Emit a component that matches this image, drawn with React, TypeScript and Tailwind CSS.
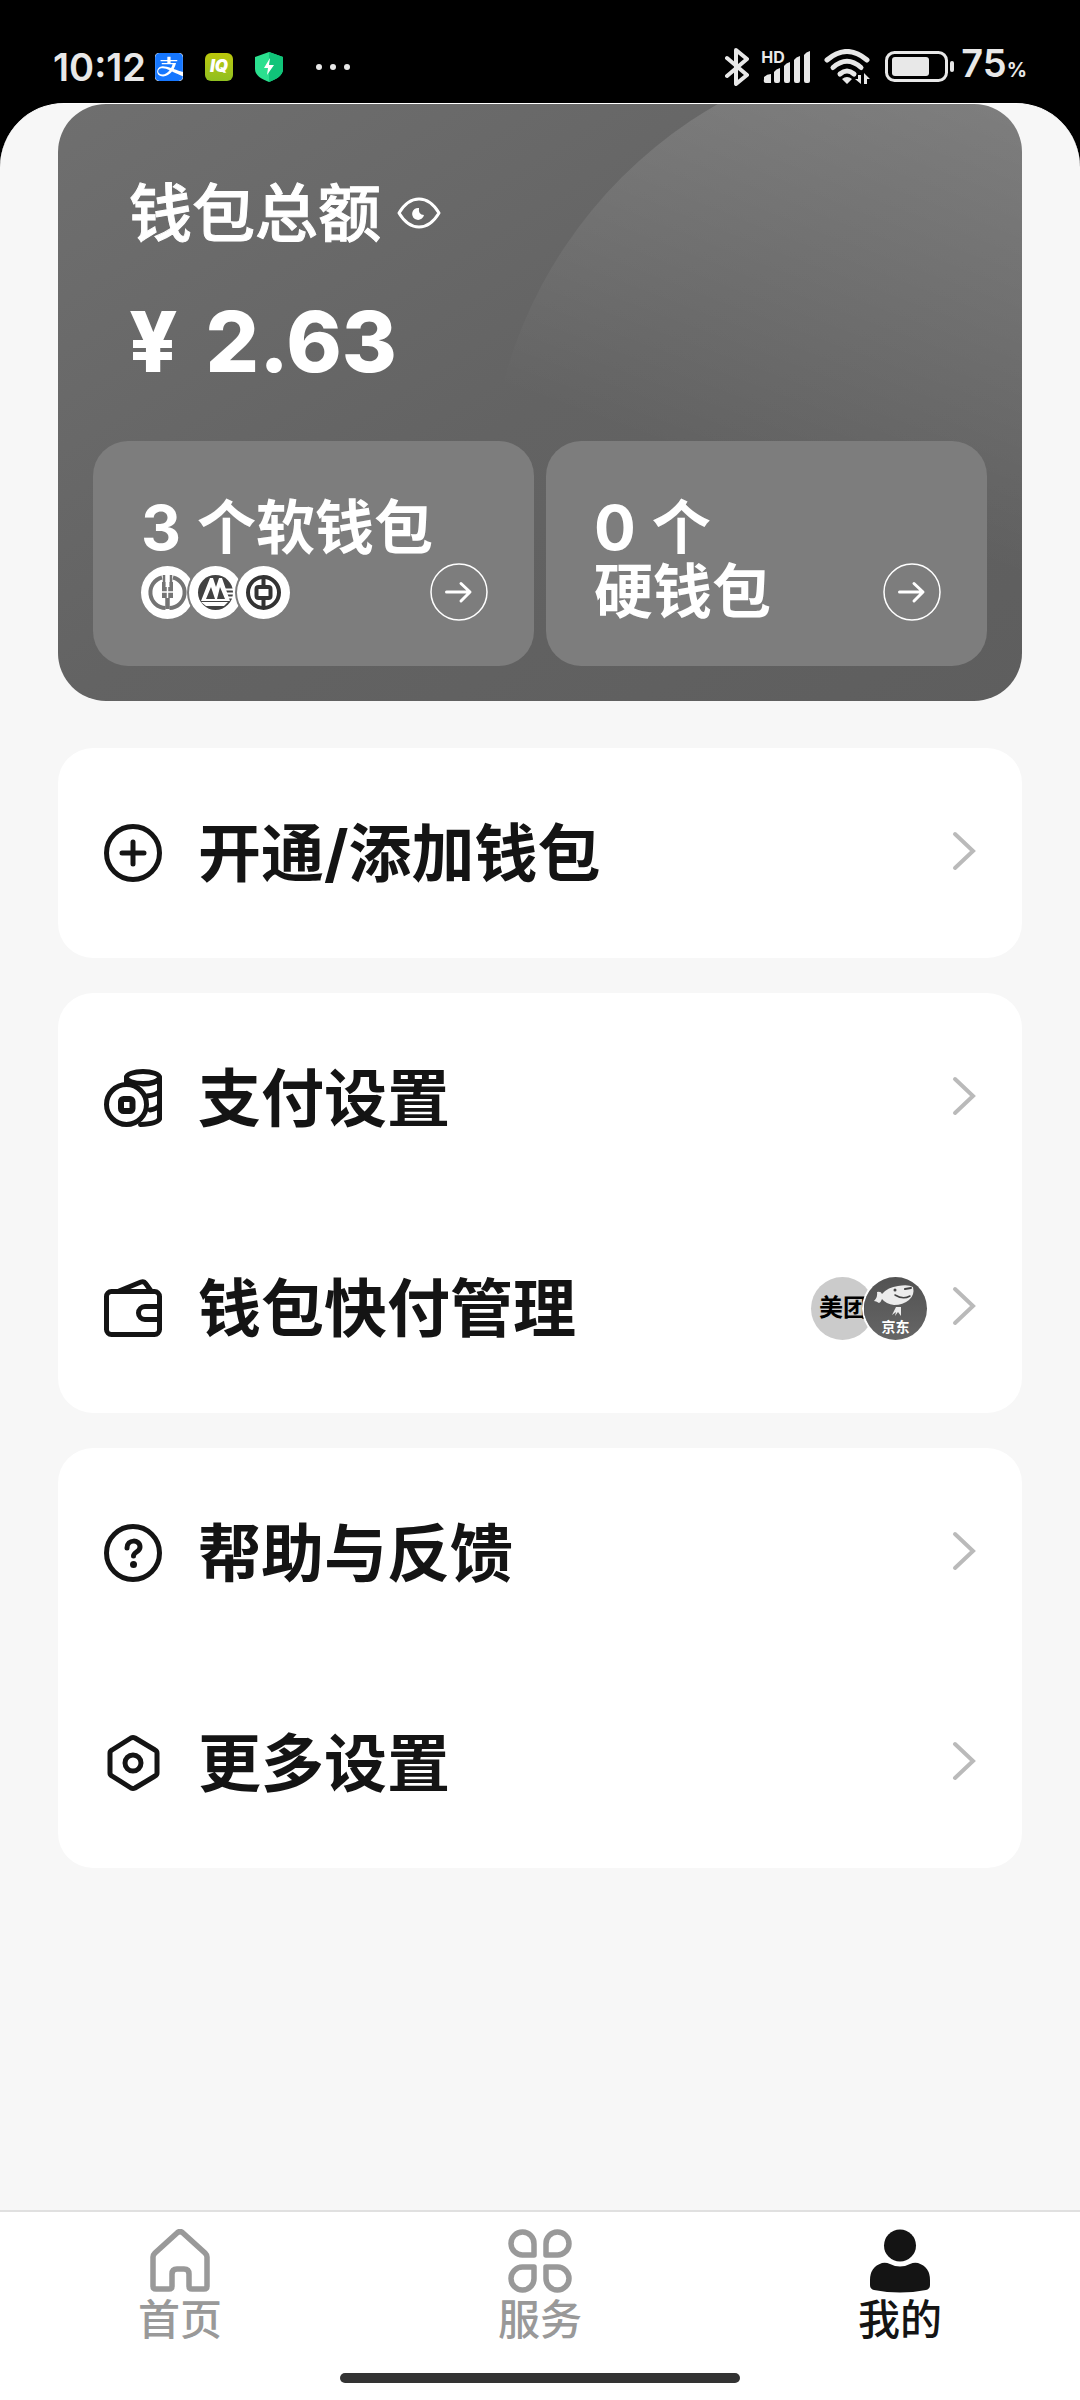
import type { ReactNode } from "react";
import { SiAlipay } from "react-icons/si";

function StatusBar() {
  return (
    <header className="flex h-[103px] items-center justify-between bg-black pt-[30px] pr-[53px] pl-[53px] text-[#e8e8e8]">
      <div className="flex items-center">
        <span className="w-[102px] text-[38px] leading-10 font-semibold">10:12</span>
        <span className="h-7 w-7 overflow-hidden rounded-sm bg-white">
          <SiAlipay className="h-7 w-7 text-[#1677ff]" />
        </span>
        <span className="ml-[22px] flex h-7 w-7 items-center justify-center rounded-md bg-linear-to-b from-[#bcc80a] to-[#8fbf20] text-[17px] leading-none font-black text-white italic">
          IQ
        </span>
        <svg className="ml-[22px] h-[30px] w-7" viewBox="0 0 28 30" aria-hidden="true">
          <path d="M14 0 28 5v12c0 6-6 10-14 13C6 27 0 23 0 17V5z" fill="#2be08f" />
          <path d="M14 0 28 5v12c0 6-6 10-14 13z" fill="#10c479" />
          <path d="M15 6 9 16h4l-1 7 7-10h-5z" fill="#fff" />
        </svg>
        <svg className="ml-[33px] h-2 w-[34px]" viewBox="0 0 34 8" fill="currentColor" aria-hidden="true">
          <circle cx="3" cy="4" r="3" />
          <circle cx="17" cy="4" r="3" />
          <circle cx="31" cy="4" r="3" />
        </svg>
      </div>

      <div className="flex items-center">
        <svg className="h-[38px] w-6" viewBox="0 0 24 38" fill="none" stroke="currentColor" strokeWidth="4" strokeLinecap="round" strokeLinejoin="round" aria-hidden="true">
          <path d="M2 10 22 27 11 36V2l11 9L2 28" />
        </svg>
        <span className="relative ml-3 h-8 w-[52px]">
          <span className="absolute top-0 left-0 text-[16px] leading-3 font-bold">HD</span>
          <svg className="h-8 w-[52px]" viewBox="0 0 52 32" fill="currentColor" aria-hidden="true">
            <path d="M3 26q3-3 7-3v9H5q-3 0-2-4zM13 21q2-3 6-4v13q0 2-2 2h-2q-2 0-2-2zM23 15q2-3 6-4v19q0 2-2 2h-2q-2 0-2-2zM33 9q2-3 6-4v25q0 2-2 2h-2q-2 0-2-2zM43 4q2-3 6-4v30q0 2-2 2h-2q-2 0-2-2z" />
          </svg>
        </span>
        <svg className="ml-[11px] h-[35px] w-[47px]" viewBox="0 0 47 35" aria-hidden="true">
          <g fill="none" stroke="currentColor" strokeWidth="5" strokeLinecap="round">
            <path d="M3 11Q23 -6 43 11" />
            <path d="M9 18.500Q23 6 37 18.500" />
            <path d="M16 25Q23 19 30 25" />
          </g>
          <path d="M18 30q5-4 10 0l-5 5zM34 26h3v9l-6-5h3zM40 35V24l6 6h-3v5z" fill="currentColor" />
        </svg>
        <svg className="ml-[14px] h-[31px] w-[70px]" viewBox="0 0 70 31" aria-hidden="true">
          <rect x="1.500" y="1.500" width="60" height="28" rx="8" fill="none" stroke="currentColor" strokeWidth="3" />
          <rect x="7" y="6" width="37" height="19" rx="3" fill="currentColor" />
          <rect x="65" y="10" width="4" height="11" rx="2" fill="currentColor" />
        </svg>
        <span className="ml-[6px] text-[38px] leading-10 font-semibold">
          75<span className="text-[20px] font-bold">%</span>
        </span>
      </div>
    </header>
  );
}

function EyeIcon() {
  return (
    <svg className="h-8 w-11" viewBox="0 0 44 32" aria-hidden="true">
      <path d="M2 16C8 6 14 2 22 2s14 4 20 14c-6 10-12 14-20 14S8 26 2 16z" fill="none" stroke="#fff" strokeWidth="3" strokeLinejoin="round" />
      <path d="M22 11a6 6 0 1 0 5 7q-6 0-5-7z" fill="#fff" />
    </svg>
  );
}

function ArrowCircle() {
  return (
    <svg className="h-[58px] w-[58px] shrink-0" viewBox="0 0 58 58" fill="none" stroke="#fff" aria-hidden="true">
      <circle cx="29" cy="29" r="28" strokeWidth="1.500" />
      <path d="M16.500 29H39M31 20.500l9 8.500-9 9" strokeWidth="3" strokeLinecap="round" strokeLinejoin="round" />
    </svg>
  );
}

function BankBadge({ children }: { children: ReactNode }) {
  return (
    <span className="h-[53px] w-[53px] rounded-full bg-white ring-2 ring-[#7d7d7d]">
      <svg className="h-[53px] w-[53px]" viewBox="0 0 53 53" aria-hidden="true">
        {children}
      </svg>
    </span>
  );
}

function BankBadges() {
  return (
    <span className="flex -space-x-[5px]">
      <BankBadge>
        <g fill="none" stroke="#747474">
          <path d="M21 11.500a15.500 15.500 0 0 0 3.500 30.500M32 11.500a15.500 15.500 0 0 1-3.500 30.500" strokeWidth="4" />
          <path d="M23 9v11M30 9v11" strokeWidth="2.500" />
          <path d="M26.500 30v13" strokeWidth="4.500" />
        </g>
        <path d="M21 16h3.500v5h4v-5H32v16H21z" fill="#747474" />
        <path d="M26.500 21v11M21 26h11" stroke="#fff" strokeWidth="1.500" />
      </BankBadge>
      <BankBadge>
        <circle cx="26.500" cy="26.500" r="17.500" fill="#424242" />
        <path d="M12 35 21 12h3l3 9 3-9h3l8 23z" fill="#fff" />
        <path d="m17 33 5-12 4 12zM28 33l3-12 5 12z" fill="#424242" />
        <path d="M12 36h27l-4 4H17z" fill="#fff" />
        <path d="M36 23.500h9M37 27.500h8M38 31.500h7" stroke="#fff" strokeWidth="2" />
      </BankBadge>
      <BankBadge>
        <g fill="none" stroke="#333">
          <circle cx="26.500" cy="26.500" r="15.500" strokeWidth="4" />
          <rect x="19.500" y="21" width="14" height="11" rx="2" strokeWidth="4" />
          <path d="M26.500 11v10M26.500 32v10" strokeWidth="4" />
        </g>
      </BankBadge>
    </span>
  );
}

interface SubWalletProps {
  count: number;
  label?: string;
  children: ReactNode;
}

function SubWallet({ count, label = "", children }: SubWalletProps) {
  return (
    <button type="button" className="rounded-[35px] bg-[#7d7d7d] pt-[52px] pr-[46px] pb-[41px] pl-12 text-left text-[59px] leading-[66px] font-bold">
      <span className="flex h-[66px] items-center gap-4 pt-1 whitespace-nowrap">
        <span className="font-['Inter',sans-serif] text-[62px]">{count}</span>
        <span>个{label}</span>
      </span>
      <span className="flex h-[66px] items-center justify-between whitespace-nowrap">
        {children}
        <ArrowCircle />
      </span>
    </button>
  );
}

function WalletCard() {
  return (
    <section className="relative overflow-hidden rounded-[48px] bg-linear-to-br from-[#6f6f6f] via-[#636363] to-[#5e5e5e] px-[35px] pb-[35px] text-white">
      {/* decorative disc behind the balance */}
      <div className="absolute -top-[60px] -right-[378px] h-[912px] w-[912px] rounded-full bg-[linear-gradient(200deg,rgba(255,255,255,0.2)_10%,transparent_54%)]" />
      <div className="relative">
        <div className="px-9 pt-[73px]">
          <div className="flex items-center gap-4">
            <h1 className="text-[63px] leading-[72px] font-medium [-webkit-text-stroke:1px]">钱包总额</h1>
            <button type="button" aria-label="隐藏金额">
              <EyeIcon />
            </button>
          </div>
          <p className="mt-[45px] flex gap-7 font-['Inter',sans-serif] text-[84px] leading-24 font-extrabold">
            <span>¥</span>
            <span>2.63</span>
          </p>
        </div>
        <div className="mt-[51px] grid grid-cols-2 gap-3">
          <SubWallet count={3} label="软钱包">
            <BankBadges />
          </SubWallet>
          <SubWallet count={0}>
            <span>硬钱包</span>
          </SubWallet>
        </div>
      </div>
    </section>
  );
}

function RowIcon({ children }: { children: ReactNode }) {
  return (
    <svg className="h-[58px] w-[58px] shrink-0" viewBox="0 0 58 58" fill="none" stroke="#141414" strokeWidth="5" strokeLinecap="round" strokeLinejoin="round" aria-hidden="true">
      {children}
    </svg>
  );
}

const icons = {
  add: (
    <RowIcon>
      <circle cx="29" cy="29" r="26.500" />
      <path d="M29 18v22M18 29h22" />
    </RowIcon>
  ),
  coins: (
    <RowIcon>
      <circle cx="22.500" cy="35.500" r="20" />
      <rect x="17" y="30" width="11.500" height="12" rx="2.500" strokeWidth="6" />
      <ellipse cx="39" cy="8.500" rx="16.500" ry="6" />
      <path d="M22.500 8.500v5M55.500 8.500V50q-3 5-19 5.500M43 27q10-1 12.500-5M46 41q7-1 9.500-5M39 15q12 0 16.500-5" />
    </RowIcon>
  ),
  wallet: (
    <RowIcon>
      <rect x="2.500" y="12.500" width="53" height="43" rx="5" />
      <path d="m15 12 22-9q3-1 5 2l5 7M55 27.500H41a6.500 6.500 0 0 0 0 13h14" />
    </RowIcon>
  ),
  help: (
    <RowIcon>
      <circle cx="29" cy="29" r="26.500" />
      <path d="M23 24c0-9 13-9 13-1 0 5-6.500 5-6.500 9" />
      <circle cx="29.500" cy="40.500" r="3.500" fill="#141414" stroke="none" />
    </RowIcon>
  ),
  settings: (
    <RowIcon>
      <path d="M27 4q2-1 4 0l20 12q2 1 2 3v20q0 2-2 3L31 54q-2 1-4 0L8 42q-2-1-2-3V19q0-2 2-3z" />
      <circle cx="29" cy="29" r="8" />
    </RowIcon>
  ),
};

function MerchantBadges() {
  return (
    <span className="mr-[25px] flex items-center -space-x-[10px]">
      <span className="flex h-[63px] w-[63px] items-center overflow-hidden rounded-full bg-[#cbcbcb] pl-2 text-[24px] leading-none font-bold whitespace-nowrap text-black">
        美团
      </span>
      <span className="relative h-[63px] w-[63px] rounded-full bg-linear-to-b from-[#525252] to-[#666] ring-2 ring-white">
        <svg className="h-[63px] w-[63px]" viewBox="0 0 63 63" aria-hidden="true">
          <path d="M18 17q6-7 16-8 10-2 15 1 2 8-4 13-6 5-15 5-8-1-12-6-1 3-3 4-3-2-5-2 4-4 3-9 4-1 5 2z" fill="#ececec" />
          <path d="M31 18q8 5 15 1" fill="none" stroke="#444" strokeWidth="1.500" strokeLinecap="round" />
          <circle cx="31" cy="13" r="1.500" fill="#444" />
          <path d="m41 12 6-1" stroke="#444" strokeWidth="2" strokeLinecap="round" />
          <path d="m32 30-4 8 4-3-1 4 3-4 3 4v-9z" fill="#ececec" />
        </svg>
        <span className="absolute inset-x-0 bottom-[6px] text-center text-[14px] leading-[14px] font-bold text-white">京东</span>
      </span>
    </span>
  );
}

interface MenuRow {
  label: string;
  icon: ReactNode;
  extra?: ReactNode;
}

const menuGroups: MenuRow[][] = [
  [{ label: "开通/添加钱包", icon: icons.add }],
  [
    { label: "支付设置", icon: icons.coins },
    { label: "钱包快付管理", icon: icons.wallet, extra: <MerchantBadges /> },
  ],
  [
    { label: "帮助与反馈", icon: icons.help },
    { label: "更多设置", icon: icons.settings },
  ],
];

function MenuGroup({ rows }: { rows: MenuRow[] }) {
  return (
    <ul className="rounded-[35px] bg-white">
      {rows.map((row) => (
        <li key={row.label}>
          <button type="button" className="flex h-[210px] w-full items-center px-[46px] text-left">
            {row.icon}
            <span className="ml-9 flex-1 text-[63px] leading-[72px] font-bold text-[#141414]">{row.label}</span>
            {row.extra}
            <svg className="mb-1 h-10 w-6 shrink-0" viewBox="0 0 24 40" fill="none" stroke="#bababa" strokeWidth="4" strokeLinecap="round" aria-hidden="true">
              <path d="M3 3 21 20 3 37" />
            </svg>
          </button>
        </li>
      ))}
    </ul>
  );
}

const tabs = [
  {
    label: "首页",
    active: false,
    icon: (
      <path d="M29 4q3-3 6 0l22 20q2 2 2 4v29q0 3-3 3H44q-3 0-3-3V45q0-5-5-5h-7q-5 0-5 5v12q0 3-3 3H8q-3 0-3-3V28q0-2 2-4z" fill="none" stroke="currentColor" strokeWidth="5.500" />
    ),
  },
  {
    label: "服务",
    active: false,
    icon: (
      <g fill="none" stroke="currentColor" strokeWidth="5.500" strokeLinejoin="round">
        <path d="M26 26H15A11.500 11.500 0 1 1 26 15z" />
        <path d="M38 26h11A11.500 11.500 0 1 0 38 15z" />
        <path d="M26 38H15a11.500 11.500 0 1 0 11 11z" />
        <path d="M38 38h11a11.500 11.500 0 1 1-11 11z" />
      </g>
    ),
  },
  {
    label: "我的",
    active: true,
    icon: (
      <g fill="currentColor">
        <circle cx="32" cy="16.500" r="16" />
        <path d="M14 34q4-1 8 1 10 5 20 0 4-2 8-1 12 4 12 17v5q0 4-4 5-26 5-52 0-4-1-4-5v-5Q2 38 14 34z" />
      </g>
    ),
  },
];

function TabBar() {
  return (
    <nav className="border-t-2 border-[#e0e0e0] bg-white pt-[17px] pb-[17px]">
      <div className="grid grid-cols-3">
        {tabs.map((tab) => (
          <a
            key={tab.label}
            href="#"
            aria-current={tab.active ? "page" : undefined}
            className={`flex flex-col items-center gap-0.5 text-[42px] leading-[50px] font-medium ${tab.active ? "text-[#141414]" : "text-[#999]"}`}
          >
            <svg className="h-16 w-16" viewBox="0 0 64 64" aria-hidden="true">
              {tab.icon}
            </svg>
            {tab.label}
          </a>
        ))}
      </div>
      <div className="mx-auto mt-7 h-[10px] w-[400px] rounded-full bg-[#333]" />
    </nav>
  );
}

export default function App() {
  return (
    <div className="flex min-h-screen flex-col bg-black font-['Inter','Noto_Sans_CJK_SC',sans-serif]">
      <StatusBar />
      <div className="flex flex-1 flex-col overflow-hidden rounded-t-[64px] border-t border-white bg-[#f7f7f7]">
        <main className="flex flex-1 flex-col gap-[35px] px-[58px] pb-12">
          <div className="mb-3">
            <WalletCard />
          </div>
          {menuGroups.map((rows) => (
            <MenuGroup key={rows[0].label} rows={rows} />
          ))}
        </main>
        <TabBar />
      </div>
    </div>
  );
}
